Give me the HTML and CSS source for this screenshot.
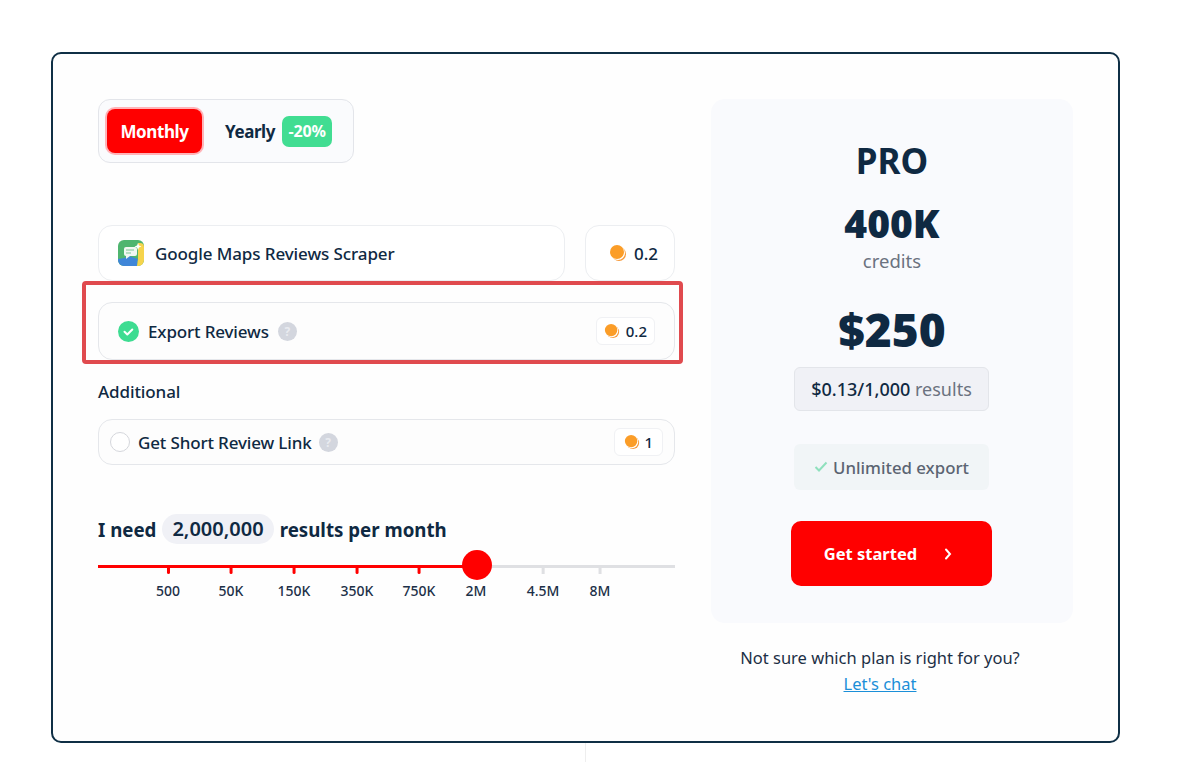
FILE: index.html
```html
<!DOCTYPE html>
<html lang="en">
<head>
    <meta charset="UTF-8">
    <meta name="viewport" content="width=device-width, initial-scale=1.0">
    <title>Pricing</title>
    <link rel="stylesheet" href="styles.css">
</head>
<body>
    <div class="pricing-card">
        <div class="left-col">
            <div class="period-switch">
                <button class="period-btn active">Monthly</button>
                <button class="period-btn">Yearly <span class="discount">-20%</span></button>
            </div>

            <div class="scraper-row">
                <div class="scraper-name">
                    <svg class="app-icon" width="26" height="26" viewBox="0 0 26 26">
                        <rect width="26" height="26" rx="6" fill="#4fb56f"/>
                        <path d="M20 3h2a4 4 0 0 1 4 4v12l-6 0z" fill="#f6d44c"/>
                        <path d="M0 19l6-1 5-2 9 3-1 7H6a6 6 0 0 1-6-6z" fill="#3f86d8"/>
                        <path d="M20 19h6v1a6 6 0 0 1-6 6h-1z" fill="#f6d44c"/>
                        <rect x="6" y="7" width="13" height="9" rx="2" fill="#f2f7f2"/>
                        <path d="M8 15v4l4-3z" fill="#f2f7f2"/>
                        <path d="M8 10h8M8 13h5" stroke="#7cc795" stroke-width="1"/>
                        <path d="M20 3l1 2.500 2.500 1-2.500 1-1 2.500-1-2.500-2.500-1 2.500-1z" fill="#fff"/>
                    </svg>
                    <span>Google Maps Reviews Scraper</span>
                </div>
                <div class="scraper-cost">
                    <svg class="coin" width="18" height="18" viewBox="0 0 18 18"><circle cx="10" cy="10" r="7" fill="#f79a3a"/><circle cx="9" cy="9" r="7" fill="#fff"/><circle cx="8" cy="8" r="7" fill="#fb9d28"/></svg>
                    <span>0.2</span>
                </div>
            </div>

            <div class="option-row option-main">
                <svg class="check" width="21" height="21" viewBox="0 0 21 21"><circle cx="10.500" cy="10.500" r="10.500" fill="#3ddc91"/><path d="M6.500 10.800l2.800 2.700 5-5" fill="none" stroke="#fff" stroke-width="2" stroke-linecap="round" stroke-linejoin="round"/></svg>
                <span class="option-text">Export Reviews</span>
                <span class="help">?</span>
                <span class="cost-tag">
                    <svg width="16" height="16" viewBox="0 0 18 18"><circle cx="10" cy="10" r="7" fill="#f79a3a"/><circle cx="9" cy="9" r="7" fill="#fff"/><circle cx="8" cy="8" r="7" fill="#fb9d28"/></svg>
                    0.2
                </span>
            </div>

            <h3 class="additional-title">Additional</h3>

            <div class="option-row option-extra">
                <span class="radio"></span>
                <span class="option-text">Get Short Review Link</span>
                <span class="help">?</span>
                <span class="cost-tag">
                    <svg width="16" height="16" viewBox="0 0 18 18"><circle cx="10" cy="10" r="7" fill="#f79a3a"/><circle cx="9" cy="9" r="7" fill="#fff"/><circle cx="8" cy="8" r="7" fill="#fb9d28"/></svg>
                    1
                </span>
            </div>

            <div class="results-line">I need <span class="results-value">2,000,000</span> results per month</div>

            <div class="slider">
                <div class="track"><div class="track-fill"></div></div>
                <div class="mark on" style="left:70px"><i></i><span>500</span></div>
                <div class="mark on" style="left:133px"><i></i><span>50K</span></div>
                <div class="mark on" style="left:196px"><i></i><span>150K</span></div>
                <div class="mark on" style="left:259px"><i></i><span>350K</span></div>
                <div class="mark on" style="left:321px"><i></i><span>750K</span></div>
                <div class="mark" style="left:378px"><i></i><span>2M</span></div>
                <div class="mark" style="left:445px"><i></i><span>4.5M</span></div>
                <div class="mark" style="left:502px"><i></i><span>8M</span></div>
                <div class="thumb"></div>
            </div>

            <!-- red box drawn over the two rows -->
            <div class="highlight"></div>
        </div>

        <div class="right-col">
            <div class="plan-panel">
                <h2 class="plan-name">PRO</h2>
                <div class="plan-credits">400K</div>
                <div class="plan-credits-label">credits</div>
                <div class="plan-price">$250</div>
                <div class="plan-rate"><b>$0.13/1,000</b> results</div>
                <div class="plan-feature">
                    <svg width="14" height="12" viewBox="0 0 14 12"><path d="M1.500 6l3.500 3.500 7.500-8" fill="none" stroke="#8fe0bd" stroke-width="2"/></svg>
                    Unlimited export
                </div>
                <button class="start-btn">Get started <span class="chevron"><svg width="8" height="12" viewBox="0 0 8 12"><path d="M2 1.500l4 4.500-4 4.500" fill="none" stroke="#fff" stroke-width="2" stroke-linecap="round"/></svg></span></button>
            </div>
            <div class="plan-note">
                <p>Not sure which plan is right for you?</p>
                <a href="#">Let's chat</a>
            </div>
        </div>
    </div>
    <div class="under-line"></div>
</body>
</html>
```

FILE: styles.css
```css
html {
    overflow: hidden;
}
body {
    margin: 0;
    padding-top: 52px;
    height: 710px;
    background-color: white;
    font-family: "Noto Sans", sans-serif;
    color: #0f2942;
}
button {
    font-family: inherit;
    border: none;
    cursor: pointer;
}
.pricing-card {
    box-sizing: border-box;
    width: 1069px;
    height: 691px;
    margin-left: 51px;
    padding: 45px 45px 0;
    border: 2px solid #0f2f45;
    border-radius: 10px;
    display: flex;
    gap: 36px;
    background-color: #fefefe;
}
.left-col {
    width: 577px;
    position: relative;
}
.right-col {
    width: 362px;
}

/* monthly / yearly */
.period-switch {
    box-sizing: border-box;
    width: 256px;
    height: 64px;
    padding: 7px;
    display: flex;
    align-items: center;
    border: 1px solid #e3e5ea;
    border-radius: 12px;
    background-color: #fafbfd;
}
.period-btn {
    font-size: 17px;
    font-weight: 700;
    letter-spacing: -0.4px;
    background: none;
    color: #0f2942;
    padding: 0;
    margin-left: 23px;
    display: flex;
    align-items: center;
    gap: 7px;
}
.period-btn.active {
    width: 95px;
    height: 44px;
    margin-left: 1px;
    justify-content: center;
    background-color: #ff0000;
    color: white;
    border-radius: 8px;
    box-shadow: 0 0 0 2px #ffb3b8;
}
.discount {
    width: 50px;
    height: 31px;
    line-height: 31px;
    border-radius: 7px;
    background-color: #41dd92;
    color: white;
    font-size: 16px;
    letter-spacing: -0.2px;
}

/* scraper row */
.scraper-row {
    display: flex;
    justify-content: space-between;
    margin-top: 62px;
}
.scraper-name, .scraper-cost {
    box-sizing: border-box;
    height: 56px;
    display: flex;
    align-items: center;
    border: 1px solid #eceef1;
    border-radius: 14px;
    background-color: white;
    font-size: 17px;
    font-weight: 500;
}
.scraper-name {
    width: 467px;
    padding-left: 19px;
    gap: 11px;
    letter-spacing: -0.1px;
}
.scraper-cost {
    width: 90px;
    padding-left: 23px;
    gap: 7px;
}

/* option rows */
.option-row {
    box-sizing: border-box;
    display: flex;
    align-items: center;
    border: 1px solid #e5e7eb;
    border-radius: 14px;
    font-size: 17px;
    font-weight: 500;
    letter-spacing: -0.15px;
    background-color: #fdfdfd;
}
.option-main {
    height: 58px;
    margin-top: 21px;
    padding: 0 19px;
}
.option-extra {
    height: 46px;
    margin-top: 15px;
    padding: 0 11px;
}
.option-main .option-text {
    margin-left: 9px;
}
.option-extra .option-text {
    margin-left: 8px;
}
.help {
    width: 19px;
    height: 19px;
    margin-left: 9px;
    border-radius: 50%;
    background-color: #d3d6de;
    color: #e9ebf0;
    font-size: 12px;
    font-weight: 700;
    line-height: 19px;
    text-align: center;
}
.option-extra .help {
    margin-left: 7px;
}
.cost-tag {
    margin-left: auto;
    height: 26px;
    padding: 0 7px;
    display: flex;
    align-items: center;
    gap: 6px;
    border: 1px solid #f0f1f4;
    border-radius: 6px;
    background-color: white;
    font-size: 15px;
    letter-spacing: 0;
}
.option-extra .cost-tag {
    padding: 0 9px;
    gap: 4px;
}
.radio {
    box-sizing: border-box;
    width: 20px;
    height: 20px;
    border: 1px solid #d5d7dc;
    border-radius: 50%;
    background-color: white;
}
.additional-title {
    margin: 20px 0 0;
    height: 24px;
    line-height: 24px;
    font-size: 17px;
    font-weight: 500;
    letter-spacing: -0.1px;
}
.highlight {
    position: absolute;
    left: -16px;
    top: 182px;
    width: 593px;
    height: 75px;
    border: 4px solid #e04a4e;
    border-radius: 4px;
}

/* results slider */
.results-line {
    margin-top: 49px;
    display: flex;
    align-items: center;
    gap: 6px;
    height: 30px;
    font-size: 18.700px;
    font-weight: 700;
}
.results-value {
    padding: 0 10px;
    height: 30px;
    line-height: 30px;
    border-radius: 15px;
    background-color: #f0f1f6;
    font-size: 20px;
    font-weight: 600;
}
.slider {
    position: relative;
    margin-top: 21px;
    height: 50px;
}
.track {
    height: 3px;
    background-color: #dfe0e3;
}
.track-fill {
    width: 379px;
    height: 3px;
    background-color: #ff0000;
}
.thumb {
    position: absolute;
    left: 364px;
    top: -15px;
    width: 30px;
    height: 30px;
    border-radius: 50%;
    background-color: #ff0000;
}
.mark {
    position: absolute;
    top: 3px;
    display: flex;
    flex-direction: column;
    align-items: center;
    transform: translateX(-50%);
    font-size: 14px;
    font-weight: 500;
    color: #1c3048;
}
.mark i {
    width: 3px;
    height: 6px;
    background-color: #dfe0e3;
}
.mark.on i {
    background-color: #ff0000;
    border-radius: 0 0 2px 2px;
}
.mark span {
    margin-top: 6px;
    line-height: 22px;
}

/* plan panel */
.plan-panel {
    height: 524px;
    box-sizing: border-box;
    padding-top: 37px;
    display: flex;
    flex-direction: column;
    align-items: center;
    border-radius: 14px;
    background-color: #f9fafd;
}
.plan-name {
    margin: 0;
    height: 50px;
    line-height: 50px;
    font-size: 35px;
    font-weight: 700;
}
.plan-credits {
    margin-top: 12px;
    height: 50px;
    line-height: 50px;
    font-size: 39px;
    font-weight: 900;
}
.plan-credits-label {
    height: 26px;
    line-height: 26px;
    font-size: 18.500px;
    color: #6b7280;
}
.plan-price {
    margin-top: 26px;
    height: 58px;
    line-height: 58px;
    font-size: 46px;
    font-weight: 900;
}
.plan-rate {
    box-sizing: border-box;
    width: 195px;
    height: 44px;
    margin: 9px 1px 0 0;
    line-height: 42px;
    text-align: center;
    border: 1px solid #e3e5ea;
    border-radius: 6px;
    background-color: #f0f1f6;
    font-size: 18px;
    color: #6b7280;
}
.plan-rate b {
    font-weight: 500;
    color: #0f2942;
}
.plan-feature {
    width: 195px;
    height: 46px;
    margin: 33px 1px 0 0;
    display: flex;
    align-items: center;
    justify-content: center;
    gap: 5px;
    border-radius: 6px;
    background-color: #f1f5f7;
    font-size: 16.800px;
    font-weight: 500;
    color: #5b6472;
}
.start-btn {
    box-sizing: border-box;
    width: 201px;
    height: 65px;
    margin: 31px 1px 0 0;
    padding: 0 7px 0 0;
    display: flex;
    align-items: center;
    justify-content: center;
    gap: 27px;
    border-radius: 10px;
    background-color: #ff0000;
    color: white;
    font-size: 16.500px;
    font-weight: 700;
}
.chevron {
    display: flex;
}
.plan-note {
    margin-top: 22px;
    padding-right: 24px;
    text-align: center;
    font-size: 16.500px;
    line-height: 26px;
    color: #1c2f45;
}
.plan-note p {
    margin: 0;
}
.plan-note a {
    color: #1b8fd8;
}
.under-line {
    width: 1px;
    height: 19px;
    margin-left: 585px;
    background-color: #eeeeee;
}
```
